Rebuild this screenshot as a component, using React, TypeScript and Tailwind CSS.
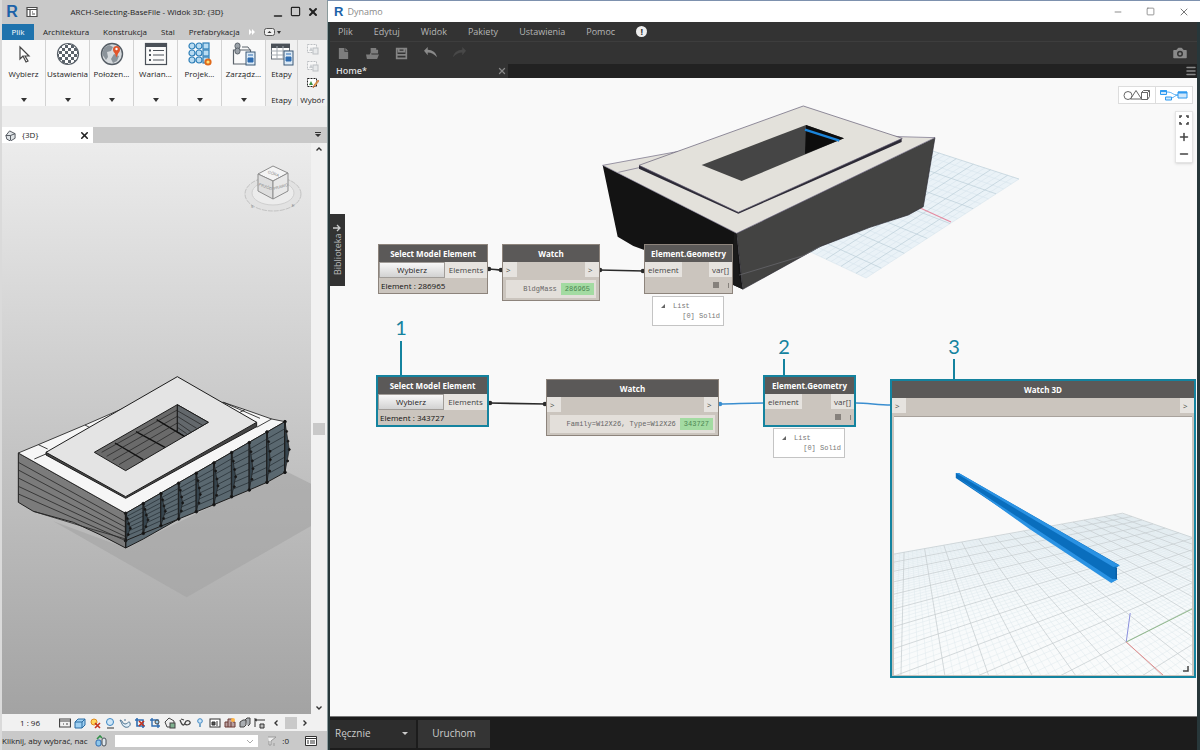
import type { ReactNode } from "react";
import { Camera, Menu, Minus, Plus, Square, X } from "lucide-react";

type Pt = [number, number];

const lerp = (a: Pt, b: Pt, t: number): Pt => [a[0] + (b[0] - a[0]) * t, a[1] + (b[1] - a[1]) * t];

const linePath = (a: Pt, b: Pt) =>
  `M${a[0].toFixed(1)} ${a[1].toFixed(1)}L${b[0].toFixed(1)} ${b[1].toFixed(1)}`;

/* ---------- Revit window ---------- */

const ribbonTabs = ["Architektura", "Konstrukcja", "Stal", "Prefabrykacja"];

function CursorIcon() {
  return (
    <svg viewBox="0 0 24 24" className="size-6">
      <path d="M8 5v12l3-3 3 6 2-1-3-5h4z" fill="#fff" stroke="#444" strokeWidth="1.2" />
    </svg>
  );
}

function MaterialIcon() {
  return (
    <svg viewBox="0 0 24 24" className="size-6">
      <defs>
        <pattern id="checker" width="6" height="6" patternUnits="userSpaceOnUse">
          <rect width="6" height="6" fill="#fff" />
          <rect width="3" height="3" fill="#5b636b" />
          <rect x="3" y="3" width="3" height="3" fill="#5b636b" />
        </pattern>
      </defs>
      <circle cx="12" cy="12" r="10.5" fill="url(#checker)" stroke="#5b636b" strokeWidth="1.2" />
    </svg>
  );
}

function GlobeIcon() {
  return (
    <svg viewBox="0 0 24 24" className="size-6">
      <circle cx="12" cy="12" r="10.5" fill="#d5d9dc" stroke="#555d65" strokeWidth="1.4" />
      <path d="M4 6l5-3 4 2-2 4-4 1 1 5-2 3-4-6zM14 12l5 2-2 5-4 2-2-4z" fill="#8b939a" />
      <circle cx="16.5" cy="7.5" r="3.5" fill="#e2552b" />
      <path d="M14 9.5h5l-2.5 6z" fill="#e2552b" />
      <circle cx="16.5" cy="7" r="1.2" fill="#fff" />
    </svg>
  );
}

function OptionsIcon() {
  return (
    <svg viewBox="0 0 24 24" className="size-6">
      <rect x="1.5" y="1.5" width="21" height="21" fill="#fafafa" stroke="#4a5058" strokeWidth="1.2" />
      <path d="M1.5 3.5h21" stroke="#4a5058" strokeWidth="3" />
      <path d="M5 8.5h2M5 13h2M5 18h2" stroke="#4a5058" strokeWidth="2" />
      <path d="M9 8.5h11M9 13h11M9 18h11" stroke="#4a5058" />
    </svg>
  );
}

function ProjectIcon() {
  const cells = [4, 11, 18];
  return (
    <svg viewBox="0 0 24 24" className="size-6">
      {cells.map((y) =>
        cells.map((x) => (
          <rect
            key={`${x}-${y}`}
            x={x - 3}
            y={y - 3}
            width="6"
            height="6"
            rx={x > 15 ? 0 : 3}
            fill="#b9dcf2"
            stroke="#2f7fb8"
            strokeWidth="1.2"
          />
        )),
      )}
      <circle cx="20" cy="20" r="2.6" fill="#ffe27a" stroke="#e06a1c" strokeWidth="2" />
    </svg>
  );
}

function ManageIcon() {
  return (
    <svg viewBox="0 0 24 24" className="size-6">
      <path d="M1.500 8h17v14h-17z" fill="#fafafa" stroke="#5b636b" strokeWidth="1.2" />
      <rect x="3" y="1" width="5" height="6" rx="2.5" fill="#9aa1a8" stroke="#5b636b" />
      <rect x="3" y="6" width="5" height="6" rx="2.5" fill="#9aa1a8" stroke="#5b636b" />
      <path d="M10 5h6l2 3" fill="none" stroke="#5b636b" />
      <rect x="14" y="10" width="9" height="13" fill="#dceaf6" stroke="#3b5876" />
      <path d="M16 13h5M16 16h5v4h-5z" fill="#2f6db1" stroke="#2f6db1" />
    </svg>
  );
}

function PhasesIcon() {
  return (
    <svg viewBox="0 0 24 24" className="size-6">
      <rect x="1.5" y="2" width="18" height="15" fill="#fff" stroke="#69717a" />
      <path d="M1 4h19" stroke="#4a5058" strokeWidth="4" />
      <path d="M1 9h18M1 13h18M7 4v13M13 4v13" stroke="#a4abb2" />
      <rect x="14" y="9" width="9" height="14" fill="#dceaf6" stroke="#3b5876" />
      <path d="M16 12h5M16 15h5v4h-5z" fill="#2f6db1" stroke="#2f6db1" />
    </svg>
  );
}

const ribbonPanels: { label: string; icon: ReactNode }[] = [
  { label: "Wybierz", icon: <CursorIcon /> },
  { label: "Ustawienia", icon: <MaterialIcon /> },
  { label: "Położen...", icon: <GlobeIcon /> },
  { label: "Warian...", icon: <OptionsIcon /> },
  { label: "Projek...", icon: <ProjectIcon /> },
  { label: "Zarządz...", icon: <ManageIcon /> },
];

function SelectionIcon({ active }: { active?: boolean }) {
  return (
    <svg viewBox="0 0 12 12" className={active ? "size-3" : "size-3 opacity-50"}>
      <rect x="0.5" y="1.5" width="9" height="8" fill="#fff" stroke={active ? "#222" : "#8a9198"} strokeDasharray="2 1" />
      <path d="M2 8l2-4 2 4z" fill={active ? "#3f9142" : "#a6adb4"} />
      {active ? (
        <path d="M6 11l1-3 4-5 1 1-4 5z" fill="#e9b04d" stroke="#b5572b" strokeWidth="0.6" />
      ) : (
        <rect x="6" y="5" width="5" height="6" fill="#dfe3e6" stroke="#8a9198" />
      )}
    </svg>
  );
}

function ViewCube() {
  return (
    <svg viewBox="0 0 60 52" className="absolute right-2 top-5 h-13 w-15">
      <ellipse cx="30" cy="31" rx="28" ry="17" fill="#e2e2e2" stroke="#c2c2c2" strokeDasharray="5 1" />
      <ellipse cx="30" cy="30" rx="21" ry="12" fill="#ececec" stroke="#cfcfcf" />
      <path d="M15 11l15-8 15 7-15 8z" fill="#f4f4f4" stroke="#8d8d8d" />
      <path d="M15 11l15 7v18l-15-8z" fill="#dedede" stroke="#8d8d8d" />
      <path d="M45 10l-15 8v18l15-8z" fill="#e8e8e8" stroke="#8d8d8d" />
      <g fill="#8a8a8a" fontSize="4" fontFamily="Liberation Sans, sans-serif" textAnchor="middle">
        <text transform="translate(30 12) rotate(20)">GÓRA</text>
        <text transform="translate(22 25) rotate(20)">PRZÓD</text>
        <text transform="translate(38 25) rotate(-16)">PRAWO</text>
        <text x="9" y="45">S</text>
        <text x="50" y="44">E</text>
      </g>
    </svg>
  );
}

const posts = [
  [377, 463, 545],
  [430, 434, 523],
  [483, 404, 500],
  [536, 373, 480],
  [589, 343, 458],
  [642, 312, 437],
  [695, 281, 413],
  [748, 251, 393],
  [801, 219, 370],
  [855, 188, 340],
];

// How far each post leans out of the facade at its waist.
const bulge = [14, 14, 13, 12, 12, 12, 12, 11, 10, 13];

function RevitModel() {
  const fractions = [0.14, 0.28, 0.42, 0.56, 0.7, 0.84];
  return (
    <svg viewBox="0 0 309 571" preserveAspectRatio="xMinYMin slice" className="absolute inset-0 size-full">
      <g transform="translate(-2 216) scale(0.3333)" stroke="#1c1c1c" strokeWidth="3" strokeLinejoin="round">
        <path d="M160 487L560 715L940 497V378L855 335L377 567Z" fill="#a4a4a4" fillOpacity="0.6" stroke="none" />
        <path d="M55 282L377 463V567L300 527L220 490L100 457L55 430Z" fill="#7b7b7b" />
        <path d="M55 310L377 488M55 333L377 505M55 357L377 520M55 382L377 533M55 405L377 545M100 457L280 512L377 540" fill="none" stroke="#2a2a2a" strokeWidth="2.5" />
        <path d="M55 282L115 257L255 198L370 148L670 130L735 152L815 180L855 188L377 463Z" fill="#f6f6f6" strokeWidth="2.5" />
        <path d="M115 257L143 270M103 300L140 284M255 198L270 206M735 152L720 160M815 180L770 205M670 130L780 178" fill="none" strokeWidth="2.5" />
        <path d="M138 280V288L377 418L600 295L770 203V190L532 200Z" fill="#454545" />
        <path d="M532 53L770 190L377 413L138 280Z" fill="#e4e4e4" />
        <path d="M532 137L625 190L377 335L283 280Z" fill="#6a6a6a" />
        <path d="M532 137L625 190L553 232L532 218Z" fill="#63686c" />
        <path
          d="M345 252L430 302M408 218L495 265M470 182L553 232"
          fill="none"
          stroke="#111"
          strokeWidth="4"
        />
        <path
          d="M305 280L532 153M320 292L532 172M338 304L532 192M357 317L532 213M532 137V218M532 155L608 199M532 172L590 208M532 190L572 218M532 205L560 224"
          fill="none"
          strokeWidth="2"
        />
        <path d="M377 463L855 188V340L801 370L748 393L642 437L536 480L430 540L377 567Z" fill="#5a6870" />
        {fractions.map((f) => (
          <polyline
            key={f}
            points={posts.map(([x, top, bottom]) => `${x},${Math.round(top + (bottom - top) * f)}`).join(" ")}
            fill="none"
            stroke="#2b353b"
            strokeWidth="2.5"
          />
        ))}
        <path d="M377 545L430 523L536 480" fill="none" />
        {posts.map(([x, top, bottom], i) => {
          const mid = top + (bottom - top) * 0.55;
          const out = x + bulge[i];
          return (
            <g key={x} fill="#111">
              <path d={`M${x} ${top}V${bottom}`} strokeWidth="5" />
              <path d={`M${x} ${top}L${out} ${mid}L${x} ${bottom}Z`} fill="#36444d" strokeWidth="2" />
              <circle cx={x} cy={top} r="4" />
              <circle cx={x + 5} cy={top + (mid - top) * 0.35} r="3" />
              <circle cx={x + 9} cy={top + (mid - top) * 0.7} r="3" />
              <circle cx={out} cy={mid} r="3" />
              <circle cx={x + 8} cy={mid + (bottom - mid) * 0.5} r="3" />
              <circle cx={x} cy={bottom} r="4" />
            </g>
          );
        })}
        <path d="M377 463V567" strokeWidth="4" />
      </g>
    </svg>
  );
}

const viewControls: { name: string; art: ReactNode }[] = [
  { name: "Poziom szczegółów", art: <path d="M.5 2h11v8H.5zM1 4h10M4 7h1M7 7h2" fill="none" stroke="#444" strokeWidth="1.2" /> },
  { name: "Styl wizualny", art: <path d="M1 5l3-3h7v6l-3 3H1zM1 5h7v6M8 5l3-3" fill="#9fd0f2" stroke="#2b6ca3" /> },
  { name: "Ścieżka słońca", art: <><circle cx="5" cy="5" r="3" fill="#ffd75e" stroke="#e08a1c" /><path d="M6 6l5 5M11 6l-5 5" stroke="#c3321f" strokeWidth="1.6" /></> },
  { name: "Cienie", art: <><circle cx="6" cy="5" r="3.5" fill="#cfe6f7" stroke="#3c87c4" /><path d="M3 11h7" stroke="#666" strokeWidth="1.4" /></> },
  { name: "Renderowanie", art: <path d="M1 3c3 0 2 4 5 4s4-4 5-1-2 5-5 4-3-4-5-7zM6 2v2" fill="#e3f0f9" stroke="#4c7391" /> },
  { name: "Przytnij widok", art: <><path d="M3 1v8h8M1 3h8v8" fill="none" stroke="#2f6db1" strokeWidth="1.6" /><path d="M5 4l5 5M10 4l-5 5" stroke="#c3321f" strokeWidth="1.6" /></> },
  { name: "Obszar przycięcia", art: <><path d="M3 1v8h8M1 3h8v8" fill="none" stroke="#2f6db1" strokeWidth="1.4" /><circle cx="8" cy="5" r="2" fill="#9fd0f2" stroke="#444" /></> },
  { name: "Blokada widoku", art: <><path d="M1 5l4-4 5 3v6H3z" fill="#eee" stroke="#444" /><rect x="6" y="6" width="5" height="5" fill="#7fb08f" stroke="#444" /></> },
  { name: "Ukryj tymczasowo", art: <path d="M1 3c2 6 4 6 5 3s4-3 5-1-3 4-5 2M2 2l3 1" fill="none" stroke="#444" strokeWidth="1.3" /> },
  { name: "Pokaż ukryte", art: <><circle cx="6" cy="4" r="2.3" fill="#cfe6f7" stroke="#3c87c4" /><path d="M5 7h2v3H5z" fill="#7aa7c8" /></> },
  { name: "Właściwości widoku", art: <><rect x="1" y="2" width="10" height="8" fill="#fff" stroke="#333" /><path d="M3 5h3v3H3zM8 4v5" fill="#555" stroke="#333" /></> },
  { name: "Model analityczny", art: <><path d="M1 5h3V2h5v3h2v5H1zM4 5v5M7 5v5" fill="#b9a0a0" stroke="#6b3b34" /><circle cx="9" cy="3" r="2" fill="#ffb545" /></> },
  { name: "Przemieszczenie", art: <path d="M1 5l3-2h3v5l-2 2H1zM6 3l2-2h3v6L9 9" fill="#a9adb1" stroke="#444" /> },
  { name: "Wiązania", art: <path d="M1 1v9M1 3h10M1 3l2-1M1 3l2 1M6 11V7h4v4z" fill="#bbb" stroke="#333" /> },
];

function RevitWindow() {
  return (
    <section className="flex min-w-0 flex-col overflow-hidden border-l-2 border-[#dadada] bg-[#c9c9c9] font-['Open_Sans','Noto_Sans',sans-serif] text-[8px] text-[#222]">
      <header className="flex h-[23px] items-center gap-2 px-1">
        <span className="w-3 text-center font-['Liberation_Sans',sans-serif] text-base font-bold text-[#1c62a8]">R</span>
        <svg viewBox="0 0 12 12" className="size-3">
          <path d="M1 1.5h10v9H1zM1 3.5h10M4 4v7M6 6h1M6 8h3" fill="#fff" stroke="#4a4a4a" strokeWidth="1.2" />
        </svg>
        <h1 className="flex-1 truncate pr-4 text-center">ARCH-Selecting-BaseFile - Widok 3D: {"{3D}"}</h1>
        <div className="flex items-center gap-[6px] pr-1 text-[#222]">
          <button aria-label="Minimalizuj"><Minus className="size-3 translate-y-1" strokeWidth={3} /></button>
          <button aria-label="Maksymalizuj"><Square className="size-[11px]" strokeWidth={2.5} /></button>
          <button aria-label="Zamknij"><X className="size-3" strokeWidth={4} /></button>
        </div>
      </header>

      <nav className="flex h-[17px] items-center gap-[14px] pr-2">
        <button className="-mr-[5px] h-4 w-8 shrink-0 bg-[#1f73ad] text-white">Plik</button>
        {ribbonTabs.map((tab) => (
          <button key={tab} className="shrink-0">{tab}</button>
        ))}
        <span className="-ml-[6px] flex items-center gap-2">
          <svg viewBox="0 0 8 6" className="h-[6px] w-2"><path d="M1 0l3 3-3 3zM4 0l3 3-3 3z" fill="#fff" /></svg>
          <svg viewBox="0 0 18 8" className="h-2 w-[18px]">
            <rect x="0.5" y="0.5" width="10" height="7" rx="2" fill="#eee" stroke="#555" />
            <path d="M3.5 5h4l-2-2zM13 3h4l-2 3z" fill="#333" />
          </svg>
        </span>
      </nav>

      <div className="flex h-[66px] gap-px overflow-hidden bg-[#d2d2d2]">
        {ribbonPanels.map((panel) => (
          <button key={panel.label} className="flex w-[43px] shrink-0 flex-col items-center bg-[#f9f9f9] pt-[2px]">
            {panel.icon}
            <span className="mt-[2px]">{panel.label}</span>
            <svg viewBox="0 0 6 4" className="mt-auto mb-1 h-1 w-[6px]"><path d="M0 0h6L3 4z" fill="#333" /></svg>
          </button>
        ))}
        <button className="flex w-[31px] shrink-0 flex-col items-center bg-[#f0f0f0] pt-[2px]">
          <PhasesIcon />
          <span className="mt-[2px]">Etapy</span>
          <span className="mt-auto">Etapy</span>
        </button>
        <button className="flex flex-1 flex-col items-center gap-[5px] overflow-hidden bg-[#f0f0f0] pt-[3px]">
          <SelectionIcon />
          <SelectionIcon />
          <SelectionIcon active />
          <span className="mt-auto">Wybór</span>
        </button>
      </div>
      <div className="h-[21px] bg-[#ededed]" />

      <div className="flex h-4 items-center justify-between pr-[6px]">
        <div className="flex h-full w-[91px] items-center gap-[6px] bg-white px-[3px]">
          <svg viewBox="0 0 12 12" className="size-[11px]">
            <path d="M1 6l4-5 6 3v5l-5 3-4-2zM6 6l5-2M6 6v5M1 6h5" fill="#dfe3e6" stroke="#4a5058" />
          </svg>
          <span className="flex-1">{"{3D}"}</span>
          <button aria-label="Zamknij widok"><X className="size-[11px] text-[#222]" strokeWidth={3.5} /></button>
        </div>
        <svg viewBox="0 0 6 6" className="size-[6px]"><path d="M0 0h6v1H0zM0 2h6L3 5z" fill="#333" /></svg>
      </div>

      <div className="flex min-h-0 flex-1">
        <div className="relative flex-1 overflow-hidden bg-linear-to-b from-[#ececec] to-[#a3a3a3]">
          <RevitModel />
          <ViewCube />
        </div>
        <div className="flex w-4 flex-col items-center justify-between bg-[#f1f1f1] py-1">
          <svg viewBox="0 0 6 4" className="h-1 w-[6px]"><path d="M.5 3.5L3 1l2.5 2.5" fill="none" stroke="#333" strokeWidth="1.4" /></svg>
          <div className="h-3 w-3 bg-[#c9c9c9]" />
          <svg viewBox="0 0 6 4" className="h-1 w-[6px]"><path d="M.5.5L3 3l2.5-2.5" fill="none" stroke="#333" strokeWidth="1.4" /></svg>
        </div>
      </div>

      <div className="flex h-[17px] items-center bg-[#f1f1f1] pl-[18px]">
        <span className="w-[39px]">1 : 96</span>
        <div className="flex gap-[3px]">
          {viewControls.map((c) => (
            <button key={c.name} aria-label={c.name}>
              <svg viewBox="0 0 12 12" className="size-3">{c.art}</svg>
            </button>
          ))}
        </div>
        <div className="ml-2 flex flex-1 items-center justify-between pr-5">
          <svg viewBox="0 0 4 6" className="h-[6px] w-1"><path d="M3.5.5L1 3l2.5 2.5" fill="none" stroke="#333" strokeWidth="1.4" /></svg>
          <span className="h-3 w-3 bg-[#c9c9c9]" />
          <svg viewBox="0 0 4 6" className="h-[6px] w-1"><path d="M.5.5L3 3 .5 5.5" fill="none" stroke="#333" strokeWidth="1.4" /></svg>
        </div>
      </div>

      <footer className="flex h-[19px] items-center gap-1 pr-[10px]">
        <span className="min-w-[89px] whitespace-nowrap">Kliknij, aby wybrać, nac</span>
        <svg viewBox="0 0 12 12" className="size-3 shrink-0">
          <rect x="1" y="5" width="5" height="6" rx="2" fill="#8ec6ea" stroke="#2f6db1" />
          <rect x="7" y="3" width="4" height="8" rx="2" fill="#dfe7ec" stroke="#4a5058" />
          <path d="M2 4l3-3 2 2" fill="none" stroke="#2f8f46" strokeWidth="1.6" />
        </svg>
        <span className="relative ml-1 flex h-3 flex-1">
          <select aria-label="Zestaw roboczy" className="w-full appearance-none bg-white" />
          <svg viewBox="0 0 8 5" className="pointer-events-none absolute right-1 top-1 h-[5px] w-2"><path d="M1 1l3 3 3-3" fill="none" stroke="#aaa" /></svg>
        </span>
        <svg viewBox="0 0 12 12" className="ml-1 size-3"><path d="M2 2h8L5 6v4H3V6M8 8v3" fill="#eee" stroke="#999" /></svg>
        <span>:0</span>
        <button aria-label="Filtr" className="ml-3">
          <svg viewBox="0 0 12 12" className="size-3"><path d="M.5 1.5h11v9H.5zM1 3.5h10M2 6h2M5 6h5M2 8h2M5 8h5" fill="#fff" stroke="#333" /></svg>
        </button>
      </footer>
    </section>
  );
}

/* ---------- Dynamo window ---------- */

const menuItems = ["Plik", "Edytuj", "Widok", "Pakiety", "Ustawienia", "Pomoc"];

// Ground plane corners in workspace coordinates.
const plane: Record<"right" | "near" | "left" | "far", Pt> = {
  right: [1019, 179],
  near: [866, 278],
  left: [766, 231],
  far: [905, 142],
};

function WorkspaceGrid() {
  const lines: string[] = [];
  for (let i = 0; i <= 20; i++) {
    const t = i / 20;
    lines.push(linePath(lerp(plane.far, plane.right, t), lerp(plane.left, plane.near, t)));
  }
  for (let i = 0; i <= 20; i++) {
    const t = i / 20;
    lines.push(linePath(lerp(plane.far, plane.left, t), lerp(plane.right, plane.near, t)));
  }
  const corners = [plane.right, plane.near, plane.left, plane.far].map((p) => p.join(",")).join(" ");
  return (
    <g>
      <polygon points={corners} fill="#eaf2f7" />
      <path d={lines.filter((_, i) => i % 3 !== 0).join("")} stroke="#d6e4ec" strokeWidth="0.6" />
      <path d={lines.filter((_, i) => i % 3 === 0).join("")} stroke="#bccfd9" strokeWidth="0.7" />
      <path d="M918 207L951 222" stroke="#e58aa0" strokeWidth="1.2" />
    </g>
  );
}

function SolidPreview() {
  return (
    <g transform="translate(590 90) scale(0.3333)" strokeLinejoin="round">
      <path d="M38 226L440 430L458 598L425 583L300 530L130 468L83 440Z" fill="#131313" />
      <path d="M440 430L1035 143L1000 350L955 375L840 412L690 470L458 598Z" fill="#434342" stroke="#2c2a33" strokeWidth="2" />
      <path d="M445 556L640 497L690 470" fill="none" stroke="#6d6d72" strokeWidth="2" />
      <path d="M440 430L447 556L458 598L425 583L432 430Z" fill="#1a1a1a" />
      <path d="M38 226L250 187L640 120L930 140L1035 143L440 430Z" fill="#e3e1db" stroke="#6c6680" strokeWidth="2" />
      <path d="M85 247L147 233" stroke="#6c6680" strokeWidth="2" />
      <path d="M147 226V236L445 371L620 295L935 156V144L640 200Z" fill="#2c2a35" />
      <path d="M640 48L937 145L445 367L147 226Z" fill="#e3e1db" stroke="#5d5770" strokeWidth="2" />
      <path d="M648 105L762 145L455 273L335 225Z" fill="#454545" />
      <path d="M648 105L762 145L645 192Z" fill="#0d0d0d" />
      <path d="M645 119L748 152" stroke="#1b84da" strokeWidth="7" />
    </g>
  );
}

function Wires() {
  return (
    <g strokeWidth="1.6">
      <g stroke="#2b2b2b" fill="#2b2b2b">
        <path d="M488 269C494 269 496 270 502 270M599 270L644 271M489 403L546 404" fill="none" />
        {[[489, 269], [501, 270], [600, 270], [643, 271], [490, 403], [545, 404]].map(([x, y]) => (
          <circle key={`${x}-${y}`} cx={x} cy={y} r="1.5" />
        ))}
      </g>
      <g stroke="#3a8ed0" fill="#3a8ed0">
        <path d="M719 404C735 404 745 403 764 403M856 403C868 403 878 405 891 405" fill="none" />
        <circle cx="720" cy="404" r="1.5" />
      </g>
    </g>
  );
}

// Perspective of the 3D preview: grid origin and the two vanishing points.
const origin: Pt = [1127, 642];
const vanishA: Pt = [907, 438];
const vanishB: Pt = [1517, 443];
const EXTENT_A = 1.137;
const EXTENT_B = 0.615;

const project = (s: number, t: number): Pt => {
  const w = 1 + s + t;
  return [
    (origin[0] + s * vanishA[0] + t * vanishB[0]) / w,
    (origin[1] + s * vanishA[1] + t * vanishB[1]) / w,
  ];
};

function previewLines() {
  const minor: string[] = [];
  const major: string[] = [];
  for (let i = -50; i <= 50; i++) {
    const target = i % 5 === 0 ? major : minor;
    const s = (EXTENT_A * i) / 50;
    const t = (EXTENT_B * i) / 50;
    const tStart = Math.max(-EXTENT_B, -0.45 - s);
    const sStart = Math.max(-EXTENT_A, -0.45 - t);
    if (tStart < EXTENT_B) target.push(linePath(project(s, tStart), project(s, EXTENT_B)));
    if (sStart < EXTENT_A) target.push(linePath(project(sStart, t), project(EXTENT_A, t)));
  }
  return { minor: minor.join(""), major: major.join("") };
}

function BeamPreview() {
  const { minor, major } = previewLines();
  return (
    <svg viewBox="894 417 299 258" preserveAspectRatio="none" className="block size-full">
      <defs>
        <linearGradient id="ground" x1="0" y1="0" x2="0" y2="1">
          <stop offset="0" stopColor="#e9f1f6" />
          <stop offset="0.6" stopColor="#f7fafb" />
          <stop offset="1" stopColor="#fafbfb" />
        </linearGradient>
      </defs>
      <path d="M890 554L1123 514L1200 539V680H890Z" fill="url(#ground)" />
      <path d={minor} stroke="#dfe8ec" strokeWidth="0.5" />
      <path d={major} stroke="#c2c9cc" strokeWidth="0.7" />
      <path d="M1127 642L1131 613" stroke="#8a8fdd" />
      <path d="M1127 642L1193 609" stroke="#8fb98a" />
      <path d="M1127 642L1165 676" stroke="#e38a8a" />
      <path d="M956 473L959 473L1120 565L1117 568L1117 580L1112 582L956 478Z" fill="#0a6ebd" />
      <path d="M956 473L959 473L1121 566L1114 567L1035 520Z" fill="#2a92e3" />
      <path d="M957 477L1035 528L1113 579L1119 579L1112 583L1030 529Z" fill="#2a92e3" />
      <path d="M1117 568V579" stroke="#0a5fa6" strokeWidth="1.5" />
      <path d="M1184 671h5v-5" fill="none" stroke="#444" strokeWidth="1.5" />
    </svg>
  );
}

function GraphNode({
  title,
  place,
  selected,
  children,
}: {
  title: string;
  place: string;
  selected?: boolean;
  children: ReactNode;
}) {
  return (
    <article
      className={`absolute flex flex-col bg-[#cbc5be] text-[8px] ${selected ? "border-2 border-[#14839f]" : "border border-[#8d847c]"} ${place}`}
    >
      <h3 className="h-[17px] shrink-0 bg-[#5b5958] text-center leading-[17px] font-bold whitespace-nowrap text-white">
        {title}
      </h3>
      {children}
    </article>
  );
}

function Port({ label }: { label: string }) {
  return (
    <span className="h-[15px] min-w-[14px] bg-[#e6e3df] px-[3px] leading-[15px] text-[#444]">{label}</span>
  );
}

function SelectElementNode({ place, id, selected }: { place: string; id: string; selected?: boolean }) {
  return (
    <GraphNode title="Select Model Element" place={place} selected={selected}>
      <div className="flex h-4">
        <button className="w-[66px] border border-[#a19d99] bg-linear-to-b from-[#f8f8f8] to-[#d2d2d2] leading-3 text-[#222]">
          Wybierz
        </button>
        <span className="flex-1 bg-[#e6e3df] text-center leading-[15px] text-[#444]">Elements</span>
      </div>
      <p className="h-[15px] px-[2px] leading-[15px] text-[#111]">Element : {id}</p>
    </GraphNode>
  );
}

function WatchNode({ place, label, id }: { place: string; label: string; id: string }) {
  return (
    <GraphNode title="Watch" place={place}>
      <div className="flex justify-between">
        <Port label=">" />
        <Port label=">" />
      </div>
      <p className="mx-[3px] mt-[3px] mb-[2px] flex h-[18px] items-center justify-end gap-1 bg-[#e3dfda] pr-[2px] font-['Liberation_Mono',monospace] text-[7px] whitespace-nowrap text-[#666]">
        {label}
        <span className="bg-[#a3dba2] px-1 leading-3 text-[#4d8652]">{id}</span>
      </p>
    </GraphNode>
  );
}

function GeometryNode({ place, selected }: { place: string; selected?: boolean }) {
  return (
    <GraphNode title="Element.Geometry" place={place} selected={selected}>
      <div className="flex justify-between">
        <Port label="element" />
        <Port label="var[]" />
      </div>
      <div className="flex h-4 items-center justify-end gap-[9px] pr-[3px]">
        <span className="size-[6px] bg-[#86817c]" />
        <span className="h-[5px] w-px bg-[#86817c]" />
      </div>
    </GraphNode>
  );
}

function ListPreview({ place }: { place: string }) {
  return (
    <div className={`absolute w-[72px] border border-[#c4c4c4] bg-white py-[4px] pr-[3px] pl-2 font-['Liberation_Mono',monospace] text-[7px] leading-[10px] text-[#777] ${place}`}>
      <p className="flex items-center gap-2">
        <svg viewBox="0 0 4 4" className="size-1"><path d="M4 0v4H0z" fill="#666" /></svg>
        List
      </p>
      <p className="text-right">[0] Solid</p>
    </div>
  );
}

function Callout({ number, place, stem }: { number: string; place: string; stem: string }) {
  return (
    <div className={`absolute flex w-4 flex-col items-center font-['Lato',sans-serif] text-xl leading-5 text-[#14839f] ${place}`}>
      {number}
      <span className={`w-[2px] bg-[#14839f] ${stem}`} />
    </div>
  );
}

function Workspace() {
  return (
    <main className="relative min-h-0 flex-1 overflow-hidden bg-[#f9f9f9]">
      <svg viewBox="330 78 867 638" className="absolute top-0 left-0 h-[638px] w-[867px]">
        <WorkspaceGrid />
        <SolidPreview />
        <Wires />
      </svg>

      <button className="absolute top-[136px] left-0 flex h-[72px] w-[15px] rotate-180 items-center justify-between bg-[#333] px-0 pt-[11px] pb-[10px] text-[9px] leading-[15px] text-[#bbb] [writing-mode:vertical-rl]">
        <span>Biblioteka</span>
        <svg viewBox="0 0 8 8" className="size-2"><path d="M8 4H1M4 1L1 4l3 3" fill="none" stroke="#ccc" strokeWidth="1.3" /></svg>
      </button>

      <SelectElementNode place="left-[48px] top-[166px] w-[110px]" id="286965" />
      <WatchNode place="left-[172px] top-[166px] w-[98px]" label="BldgMass" id="286965" />
      <GeometryNode place="left-[314px] top-[166px] w-[89px]" />
      <ListPreview place="left-[322px] top-[218px]" />

      <SelectElementNode place="left-[46px] top-[297px] w-[113px]" id="343727" selected />
      <WatchNode place="left-[216px] top-[301px] w-[173px]" label="Family=W12X26, Type=W12X26" id="343727" />
      <GeometryNode place="left-[433px] top-[297px] w-[93px]" selected />
      <ListPreview place="left-[443px] top-[350px]" />

      <GraphNode title="Watch 3D" place="left-[560px] top-[301px] w-[306px] h-[299px]" selected>
        <div className="flex justify-between">
          <Port label=">" />
          <Port label=">" />
        </div>
        <div className="mx-[2px] mt-[3px] mb-px min-h-0 flex-1 border-t border-[#a8a29c] bg-[#f9f9f9]">
          <BeamPreview />
        </div>
      </GraphNode>

      <Callout number="1" place="left-[63px] top-[239px]" stem="mt-1 h-[34px]" />
      <Callout number="2" place="left-[446px] top-[258px]" stem="mt-[3px] h-4" />
      <Callout number="3" place="left-[616px] top-[258px]" stem="mt-[3px] h-5" />

      <div className="absolute top-2 right-1 flex flex-col items-end gap-[7px]">
        <div className="flex h-[18px] divide-x divide-[#ddd] border border-[#ddd] bg-white">
          <button aria-label="Podgląd 3D" className="px-1">
            <svg viewBox="0 0 28 12" className="h-3 w-7">
              <path d="M13 1.5L18.5 10H7.5zM18.5 3.5h6v7h-6zM18.5 3.5l2-2h6v6l-2 3M24.5 3.5l2-2" fill="none" stroke="#666" />
              <circle cx="5" cy="6.5" r="4" fill="none" stroke="#666" />
            </svg>
          </button>
          <button aria-label="Widok wykresu" className="px-1">
            <svg viewBox="0 0 28 12" className="h-3 w-7">
              <path d="M7 3c6 0 5 3 11 3M11 9c3 0 4-3 7-3" fill="none" stroke="#2f9af0" strokeWidth="0.8" />
              <path d="M.5 1.5h6v4h-6zM5.5 8h6v3h-6zM18 3h9v6h-9z" fill="#cfe7fb" stroke="#2f9af0" />
              <path d="M.5 2h6M18 3.5h9" stroke="#2f9af0" strokeWidth="2" />
            </svg>
          </button>
        </div>
        <div className="flex w-[18px] flex-col items-center gap-[5px] border border-[#e4e4e4] bg-white py-[2px] text-[#444] shadow-sm">
          <button aria-label="Dopasuj">
            <svg viewBox="0 0 12 12" className="size-3"><path d="M2 4V2h2M8 2h2v2M10 8v2H8M4 10H2V8" fill="none" stroke="#444" strokeWidth="1.6" /></svg>
          </button>
          <button aria-label="Powiększ"><Plus className="size-3" strokeWidth={3} /></button>
          <button aria-label="Pomniejsz"><Minus className="size-3" strokeWidth={3} /></button>
        </div>
      </div>
    </main>
  );
}

function Toolbar() {
  return (
    <div className="flex h-[23px] shrink-0 items-center gap-4 border-t border-[#3d3d3d] bg-[#333] pr-2 pl-[7px]">
      <button aria-label="Nowy">
        <svg viewBox="0 0 14 14" className="size-[13px]"><path d="M2 1h6v4h4v8H2zM9 1l3 3H9z" fill="#7d7d7d" /></svg>
      </button>
      <button aria-label="Otwórz">
        <svg viewBox="0 0 14 14" className="size-[13px]"><path d="M5 1h6v2h2v4H5zM0 8h4l1-2 1 2h8l-2 5H1z" fill="#7d7d7d" /></svg>
      </button>
      <button aria-label="Zapisz">
        <svg viewBox="0 0 14 14" className="size-[13px]"><path d="M1.8 1.8h10.4v10.4H1.8zM4 2v3h6V2M2 8.5h10" fill="none" stroke="#858585" strokeWidth="1.8" /></svg>
      </button>
      <button aria-label="Cofnij">
        <svg viewBox="0 0 14 14" className="size-[13px]"><path d="M4 0v3c5 0 9 3 10 8-3-3-6-5-10-5v3L0 4z" fill="#8a8a8a" /></svg>
      </button>
      <button aria-label="Ponów" disabled>
        <svg viewBox="0 0 14 14" className="size-[13px]"><path d="M10 0v3C5 3 1 6 0 11c3-3 6-5 10-5v3l4-5z" fill="#484848" /></svg>
      </button>
      <button aria-label="Zrzut ekranu" className="ml-auto"><Camera className="size-[18px] fill-[#8a8a8a] text-[#333]" /></button>
    </div>
  );
}

function DynamoWindow() {
  return (
    <section className="flex min-w-0 flex-col border-t border-l border-t-[#7d91ae] border-l-[#8a9a9c] bg-[#1c1c1c] font-['Open_Sans','Noto_Sans',sans-serif]">
      <header className="flex h-[21px] shrink-0 items-center gap-1 bg-white pr-[10px] pl-[6px]">
        <span className="font-['Liberation_Sans',sans-serif] text-[13px] font-bold text-[#1c62a8]">R</span>
        <h1 className="flex-1 text-[9px] text-[#8a8a8a]">Dynamo</h1>
        <div className="flex items-center gap-[23px] text-[#777]">
          <button aria-label="Minimalizuj"><Minus className="size-[10px]" /></button>
          <button aria-label="Maksymalizuj"><Square className="size-[9px]" /></button>
          <button aria-label="Zamknij"><X className="size-3" /></button>
        </div>
      </header>

      <div className="flex min-h-0 flex-1 flex-col border-r-[3px] border-l-2 border-[#27373a]">
        <nav className="flex h-[19px] shrink-0 items-center gap-[21px] bg-[#333] pl-2 text-[9px] text-[#b5b5b5]">
          {menuItems.map((item) => (
            <button key={item}>{item}</button>
          ))}
          <span className="size-[11px] rounded-full bg-[#eee] text-center text-[9px] leading-[11px] font-bold text-[#333]">!</span>
        </nav>
        <Toolbar />
        <div className="flex h-[14px] shrink-0 items-center justify-between bg-[#222]">
          <div className="flex h-full w-[178px] items-center justify-between bg-[#333] pr-px pl-[6px] text-[9px] font-semibold text-[#ddd]">
            Home*
            <button aria-label="Zamknij kartę"><X className="size-[10px] text-[#888]" strokeWidth={3} /></button>
          </div>
          <Menu className="size-3 text-[#888]" strokeWidth={3} />
        </div>

        <Workspace />

        <footer className="flex h-[34px] shrink-0 items-center gap-[2px] border-t border-[#777] bg-[#1c1c1c] text-[10px] text-[#ccc]">
          <span className="relative flex h-7 w-[86px]">
            <select aria-label="Tryb uruchamiania" className="w-full appearance-none bg-[#2d2d2d] px-[5px]">
              <option>Ręcznie</option>
            </select>
            <svg viewBox="0 0 6 3" className="pointer-events-none absolute top-3 right-2 h-[3px] w-[6px]"><path d="M0 0h6L3 3z" fill="#ccc" /></svg>
          </span>
          <button className="h-7 w-[72px] bg-[#343434]">Uruchom</button>
        </footer>
      </div>
    </section>
  );
}

export default function App() {
  return (
    <div className="grid h-screen grid-cols-[327fr_873fr] overflow-hidden bg-[#c9c9c9]">
      <RevitWindow />
      <DynamoWindow />
    </div>
  );
}
